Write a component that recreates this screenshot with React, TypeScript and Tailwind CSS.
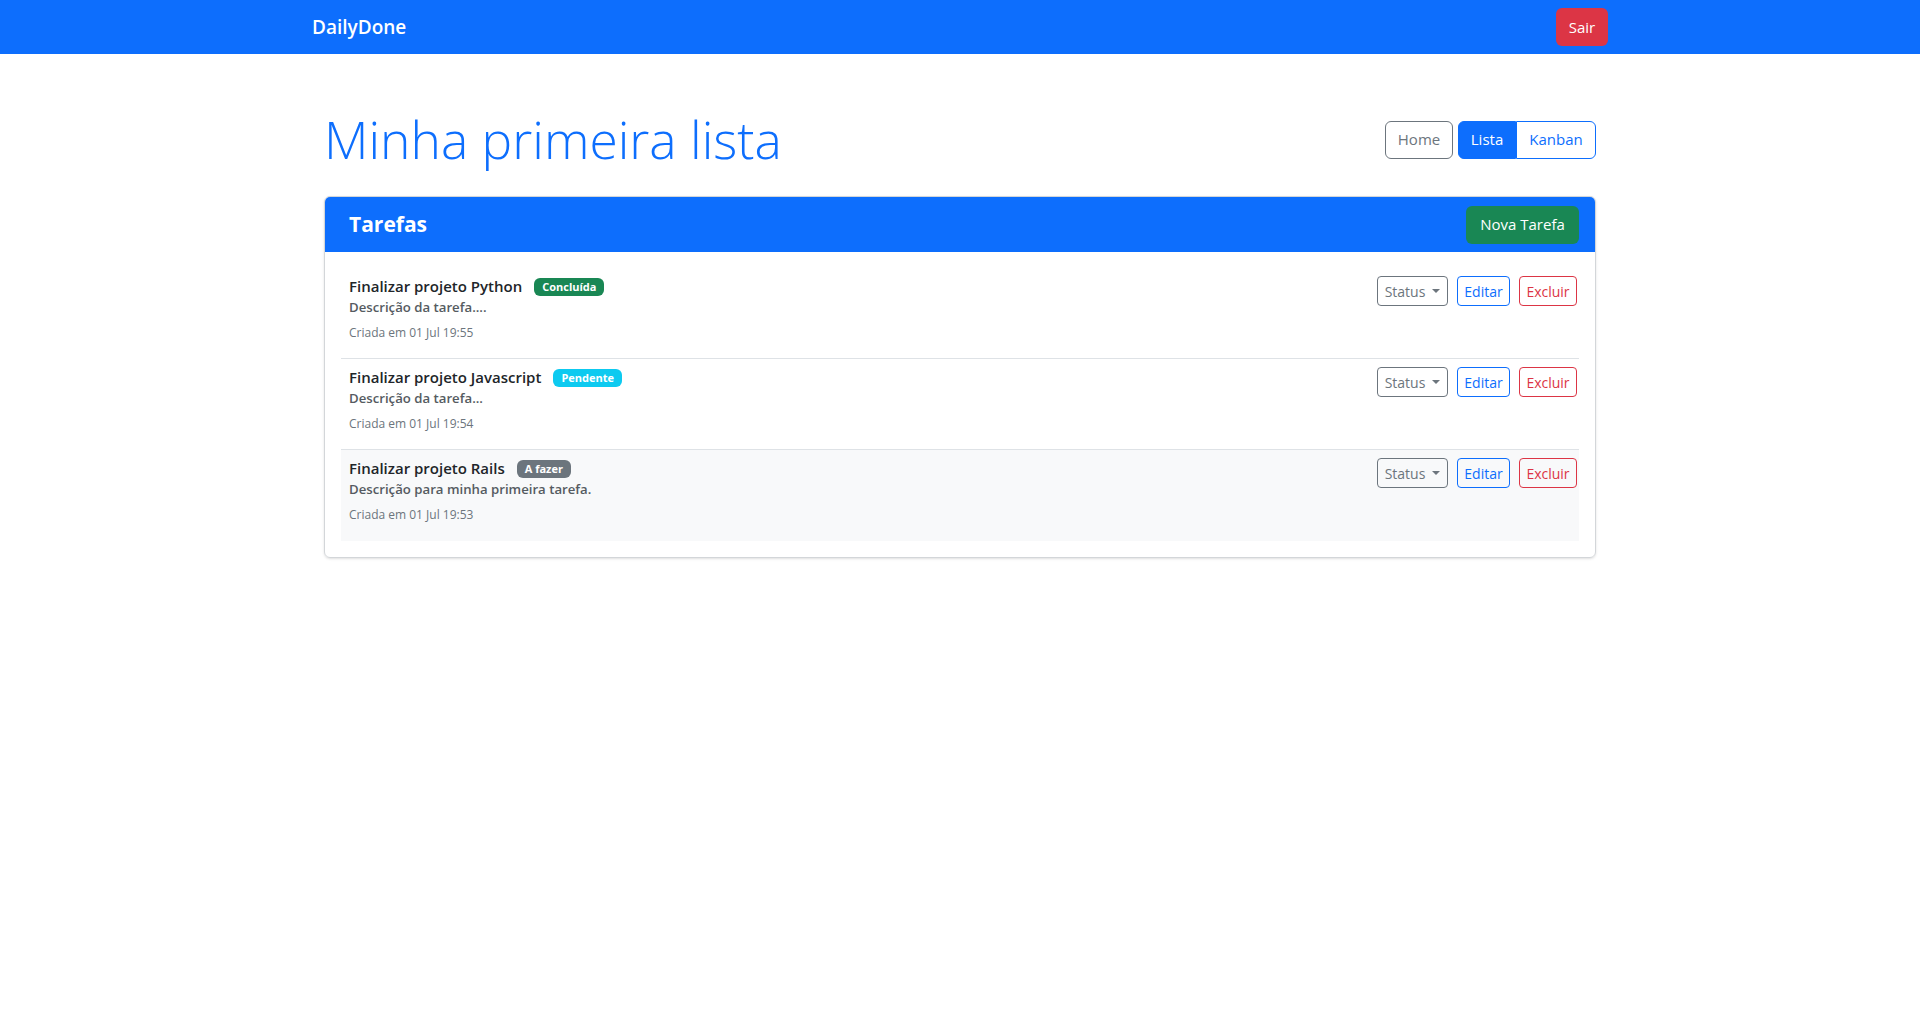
import React from 'react';

const font = { fontFamily: '"Open Sans", "Noto Sans", sans-serif' };

type Task = {
  title: string;
  desc: string;
  date: string;
  status: 'done' | 'pending' | 'todo';
};

const tasks: Task[] = [
  { title: 'Finalizar projeto Python', desc: 'Descrição da tarefa....', date: 'Criada em 01 Jul 19:55', status: 'done' },
  { title: 'Finalizar projeto Javascript', desc: 'Descrição da tarefa...', date: 'Criada em 01 Jul 19:54', status: 'pending' },
  { title: 'Finalizar projeto Rails', desc: 'Descrição para minha primeira tarefa.', date: 'Criada em 01 Jul 19:53', status: 'todo' },
];

const Badge = ({ status }: { status: Task['status'] }) => {
  if (status === 'done')
    return <span className="ml-3 rounded-[6px] bg-[#198754] px-[8px] py-[3px] text-[11px] font-bold leading-[12px] text-white">Concluída</span>;
  if (status === 'pending')
    return <span className="ml-3 rounded-[6px] bg-[#0dcaf0] px-[8px] py-[3px] text-[11px] font-bold leading-[12px] text-white">Pendente</span>;
  return <span className="ml-3 rounded-[6px] bg-[#6c757d] px-[8px] py-[3px] text-[11px] font-bold leading-[12px] text-white">A fazer</span>;
};

const TaskRow = ({ task, last }: { task: Task; last: boolean }) => (
  <li className={`flex items-start justify-between pl-2 pr-[2px] pt-2 h-[91px] ${last ? 'bg-[#f8f9fa]' : 'border-b border-[#dee2e6]'}`}>
    <div>
      <div className="flex items-center">
        <span className="text-[15px] font-semibold leading-[21px] text-[#212529]">{task.title}</span>
        <Badge status={task.status} />
      </div>
      <p className="text-[13.2px] font-semibold leading-[20px] text-[#555b61]">{task.desc}</p>
      <p className="mt-[7px] text-[12px] font-medium leading-[18px] text-[#6c757d]">{task.date}</p>
    </div>
    <div className="flex items-center gap-[9px]">
      <button className="flex h-[30px] w-[71px] items-center justify-center rounded-[4px] border border-[#6c757d] text-[14px] text-[#6c757d]">
        Status
        <span className="ml-[7px] h-0 w-0 border-x-[4px] border-t-[4px] border-x-transparent border-t-[#6c757d]" />
      </button>
      <button className="h-[30px] w-[53px] rounded-[4px] border border-[#0d6efd] text-[14px] text-[#0d6efd]">Editar</button>
      <button className="h-[30px] w-[58px] rounded-[4px] border border-[#dc3545] text-[14px] text-[#dc3545]">Excluir</button>
    </div>
  </li>
);

export default function App() {
  return (
    <div style={font} className="min-h-screen bg-white text-[#212529]">
      <nav className="bg-[#0d6efd]">
        <div className="mx-auto flex h-[54px] w-[1320px] items-center justify-between px-3">
          <span className="text-[19px] font-semibold text-white">DailyDone</span>
          <button className="h-[38px] w-[52px] rounded-[6px] bg-[#dc3545] text-[15px] text-white">Sair</button>
        </div>
      </nav>

      <main className="mx-auto w-[1320px] px-6">
        <div className="mt-[52px] flex items-center justify-between">
          <h1 className="text-[51.5px] font-light leading-[67px] text-[#0d6efd]">Minha primeira lista</h1>
          <div className="flex items-center">
            <button className="h-[38px] w-[68px] rounded-[6px] border border-[#6c757d] text-[15px] text-[#6c757d]">Home</button>
            <div className="ml-[5px] flex">
              <button className="h-[38px] w-[58px] rounded-l-[6px] border border-[#0d6efd] bg-[#0d6efd] text-[15px] text-white">Lista</button>
              <button className="h-[38px] w-[80px] rounded-r-[6px] border border-[#0d6efd] text-[15px] text-[#0d6efd]">Kanban</button>
            </div>
          </div>
        </div>

        <section className="mt-[23px] overflow-hidden rounded-[6px] border border-[#d3d6d9] shadow-sm">
          <header className="flex h-[55px] items-center justify-between bg-[#0d6efd] pl-6 pr-4">
            <h2 className="text-[21px] font-bold text-white">Tarefas</h2>
            <button className="h-[38px] w-[113px] rounded-[6px] bg-[#198754] text-[15px] text-white">Nova Tarefa</button>
          </header>
          <ul className="p-4">
            {tasks.map((t, i) => (
              <TaskRow key={t.title} task={t} last={i === tasks.length - 1} />
            ))}
          </ul>
        </section>
      </main>
    </div>
  );
}
